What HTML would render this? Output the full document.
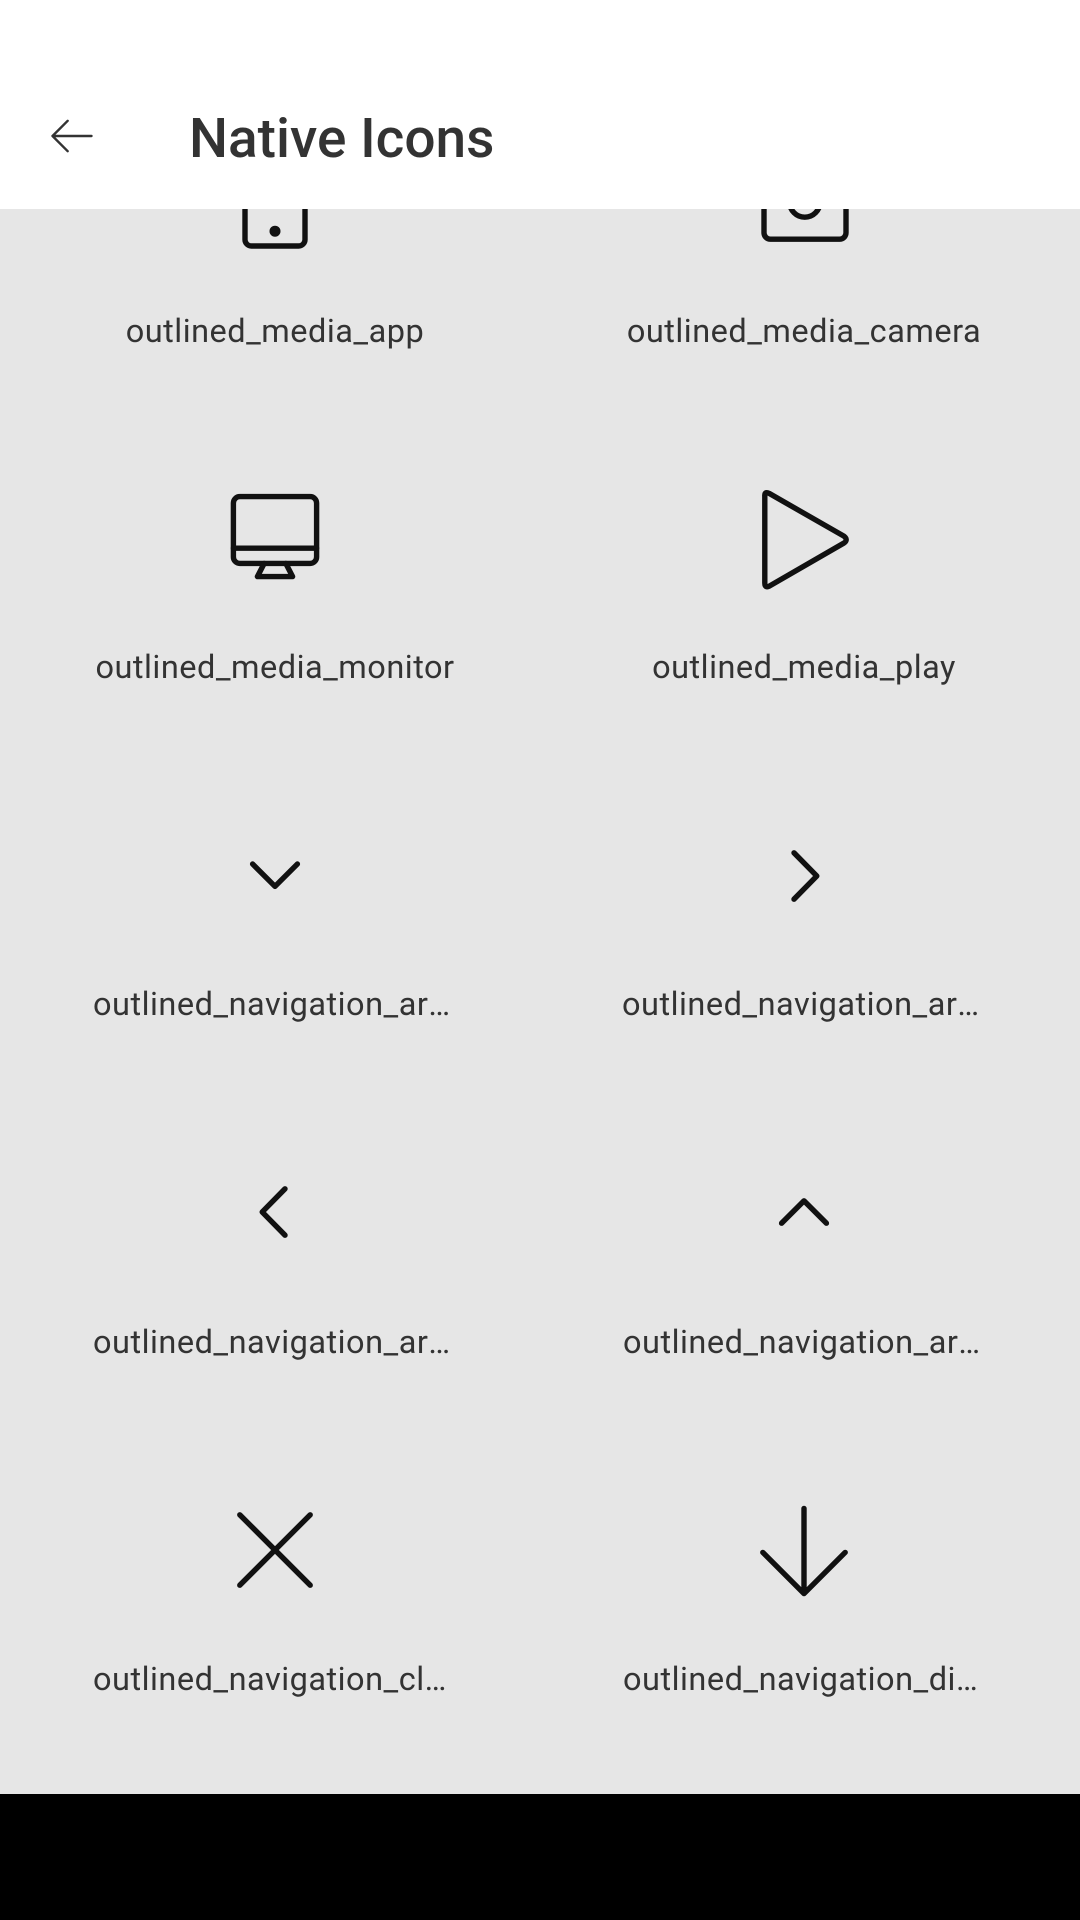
<!DOCTYPE html>
<html><head><meta charset="utf-8"><style>
*{margin:0;padding:0;box-sizing:border-box}
body{width:1080px;height:1920px;overflow:hidden;background:#e6e6e6;font-family:"Roboto","Liberation Sans",sans-serif;position:relative}
.hdr{position:absolute;left:0;top:0;width:1080px;height:209px;background:#fff;z-index:2}
.title{position:absolute;left:189px;top:107px;font-size:55px;font-weight:500;color:#333;line-height:64px}
.back{position:absolute;left:46px;top:110px}
.bot{position:absolute;left:0;top:1794px;width:1080px;height:126px;background:#000;z-index:2}
.lbl{position:absolute;width:360px;text-align:center;font-size:32.5px;color:#333;white-space:nowrap;overflow:hidden;text-overflow:ellipsis;letter-spacing:0.5px;line-height:44px}
.ic{position:absolute;width:96px;height:96px;overflow:visible}
.ic svg{width:96px;height:96px;overflow:visible;fill:none;stroke:#111;stroke-width:1.35;stroke-linecap:round;stroke-linejoin:round}
</style></head><body>
<div class="hdr">
<svg class="back" width="52" height="52" viewBox="0 0 24 24" fill="none" stroke="#333" stroke-width="1.1" stroke-linecap="round" stroke-linejoin="round"><path d="M21 12H3M10 5L3 12L10 19"/></svg>
<div class="title">Native Icons</div>
</div>

<div class="ic" style="left:227px;top:162px"><svg viewBox="0 0 24 24"><rect x="4.5" y="-4" width="15" height="25" rx="1.6"/><circle cx="12" cy="17.3" r="0.7" fill="#111"/></svg></div>
<div class="ic" style="left:756px;top:162px"><svg viewBox="0 0 24 24"><rect x="2" y="-2" width="20.5" height="21.3" rx="1.6"/><circle cx="12.2" cy="10" r="3.8"/></svg></div>
<div class="lbl" style="left:95px;top:309px">outlined_media_app</div>
<div class="lbl" style="left:624px;top:309px;text-overflow:clip">outlined_media_camera</div>

<div class="ic" style="left:227px;top:491px"><svg viewBox="0 0 24 24"><rect x="1.6" y="1.4" width="20.8" height="16.7" rx="1.6"/><path d="M1.6 14.3H22.4M9.3 18.1L7.6 21.4H16.4L14.7 18.1"/></svg></div>
<div class="ic" style="left:756px;top:491px"><svg viewBox="0 0 24 24"><path d="M2.2 1.3Q2.1 0 3.3 0.6L22 11.3Q23.1 12.2 22 13L3.3 23.8Q2.2 24.3 2.2 23Z"/></svg></div>
<div class="lbl" style="left:95px;top:645px">outlined_media_monitor</div>
<div class="lbl" style="left:624px;top:645px">outlined_media_play</div>

<div class="ic" style="left:227px;top:828px"><svg viewBox="0 0 24 24"><path d="M6.4 9L12 14.6L17.6 9"/></svg></div>
<div class="ic" style="left:756px;top:828px"><svg viewBox="0 0 24 24"><path d="M9.5 6.2L15.2 12L9.5 17.8"/></svg></div>
<div class="lbl" style="left:93px;top:982px">outlined_navigation_arrow_down</div>
<div class="lbl" style="left:622px;top:982px">outlined_navigation_arrow_right</div>

<div class="ic" style="left:227px;top:1164px"><svg viewBox="0 0 24 24"><path d="M14.5 6.2L8.8 12L14.5 17.8"/></svg></div>
<div class="ic" style="left:756px;top:1164px"><svg viewBox="0 0 24 24"><path d="M6.4 14.8L12 9.2L17.6 14.8"/></svg></div>
<div class="lbl" style="left:93px;top:1320px">outlined_navigation_arrow_left</div>
<div class="lbl" style="left:623px;top:1320px">outlined_navigation_arrow_up</div>

<div class="ic" style="left:227px;top:1502px"><svg viewBox="0 0 24 24"><path d="M3.2 3.2L20.8 20.8M20.8 3.2L3.2 20.8"/></svg></div>
<div class="ic" style="left:756px;top:1502px"><svg viewBox="0 0 24 24"><path d="M12 1.6V22.9M1.7 12.6L12 22.9L22.3 12.6"/></svg></div>
<div class="lbl" style="left:93px;top:1657px">outlined_navigation_close</div>
<div class="lbl" style="left:623px;top:1657px">outlined_navigation_direction</div>

<div class="bot"></div>
</body></html>
